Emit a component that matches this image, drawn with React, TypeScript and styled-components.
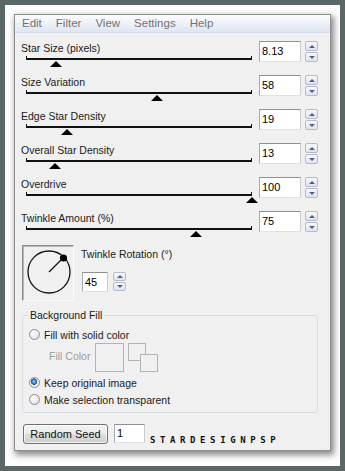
import React from 'react';
import styled, { createGlobalStyle } from 'styled-components';

const GlobalStyle = createGlobalStyle`
  html, body {
    margin: 0;
    padding: 0;
    background: #5b6667;
  }
  body {
    font-family: "Liberation Sans", Arial, sans-serif;
  }
`;

const Frame = styled.div`
  width: 345px;
  height: 471px;
  box-sizing: border-box;
  border: 5px solid #5b6667;
  background: #fdfdfd;
  padding: 9px 9px 0 9px;
`;

const Panel = styled.div`
  border: 1px solid #8e8e8e;
  background: #f0f0f0;
  box-shadow: 2px 3px 6px 1px rgba(0, 0, 0, 0.45);
  display: flex;
  flex-direction: column;
`;

const MenuBar = styled.div`
  height: 17px;
  display: flex;
  align-items: center;
  background: linear-gradient(#fbfcfe 0%, #eef2f9 45%, #dfe6f3 100%);
  border-bottom: 1px solid #d2d9e6;
`;

const MenuItem = styled.span`
  padding: 0 7px;
  font-size: 11.5px;
  color: #727272;
  line-height: 17px;
`;

const Content = styled.div`
  padding: 7px 12px 6px 6px;
  display: flex;
  flex-direction: column;
`;

const SliderRow = styled.div`
  height: 34px;
  display: flex;
  align-items: flex-start;
`;

const SliderColumn = styled.div`
  flex: 1;
  min-width: 0;
`;

const Label = styled.div`
  font-size: 10.5px;
  line-height: 14px;
  color: #1a1a1a;
  margin-top: 1px;
  white-space: nowrap;
`;

const Track = styled.div`
  position: relative;
  margin: 0 7px 0 5px;
  height: 11px;
`;

const TrackLine = styled.div`
  margin-top: 1px;
  height: 2px;
  border-left: 1px solid #111;
  border-right: 1px solid #111;
  border-bottom: 2px solid #111;
`;

const Thumb = styled.div`
  position: absolute;
  top: 5px;
  width: 0;
  height: 0;
  border-left: 6px solid transparent;
  border-right: 6px solid transparent;
  border-bottom: 6px solid #000;
  transform: translateX(-50%);
`;

const NumberBox = styled.div<{ $w: number; $h: number }>`
  width: ${({ $w }) => $w}px;
  height: ${({ $h }) => $h}px;
  box-sizing: border-box;
  margin-top: 1px;
  background: #fff;
  border: 1px solid;
  border-color: #8f9092 #c9cdd3 #dde1e6 #a8abb0;
  font-size: 11px;
  line-height: ${({ $h }) => $h - 2}px;
  padding-left: 2px;
  color: #000;
`;

const Spinner = styled.div<{ $h: number; $gap: number }>`
  width: 13px;
  height: ${({ $h }) => $h}px;
  margin-left: ${({ $gap }) => $gap}px;
  margin-top: 1px;
  display: flex;
  flex-direction: column;
  gap: 1px;
`;

const SpinButton = styled.div<{ $down?: boolean }>`
  flex: 1;
  box-sizing: border-box;
  border: 1px solid #b4bccb;
  border-radius: 2px;
  background: linear-gradient(#f7f8fb, #dfe3ec);
  display: flex;
  align-items: center;
  justify-content: center;

  &::after {
    content: '';
    width: 0;
    height: 0;
    border-left: 3px solid transparent;
    border-right: 3px solid transparent;
    ${({ $down }) =>
      $down ? 'border-top: 3px solid #4e6286;' : 'border-bottom: 3px solid #4e6286;'}
  }
`;

const RotationRow = styled.div`
  display: flex;
  align-items: flex-start;
  margin-top: 1px;
`;

const DialBox = styled.div`
  width: 52px;
  height: 56px;
  box-sizing: border-box;
  margin-left: 1px;
  border: 1px solid;
  border-color: #8a8a8a #fafafa #fafafa #8a8a8a;
  box-shadow: inset 1px 1px 0 #b9b9b9;
  display: flex;
  align-items: center;
  justify-content: center;
`;

const RotationControls = styled.div`
  margin-left: 7px;
  display: flex;
  flex-direction: column;
`;

const RotationLabel = styled(Label)`
  margin-top: 2px;
`;

const InlineControls = styled.div`
  display: flex;
  align-items: flex-start;
  margin-top: 10px;
  margin-left: 1px;
`;

const GroupBox = styled.fieldset`
  margin: 7px 0 0 1px;
  padding: 0 8px 4px 5px;
  border: 1px solid #d5dde3;
  border-radius: 3px;
  min-width: 0;
`;

const Legend = styled.legend`
  padding: 0 2px;
  font-size: 10.5px;
  line-height: 14px;
  color: #1a1a1a;
`;

const RadioRow = styled.div<{ $top: number }>`
  height: 17px;
  margin-top: ${({ $top }) => $top}px;
  margin-left: 1px;
  display: flex;
  align-items: center;
  gap: 4px;
  font-size: 10.5px;
  color: #1a1a1a;
`;

const RadioDot = styled.span<{ $checked?: boolean }>`
  width: 11px;
  height: 11px;
  box-sizing: border-box;
  border-radius: 50%;
  border: 1px solid #8b8f95;
  background: ${({ $checked }) =>
    $checked
      ? 'radial-gradient(circle at 45% 40%, #9fd0ff 0, #2d75c8 2.2px, #1b4f94 3px, #e9edf2 3.4px, #f7f8fa 100%)'
      : 'radial-gradient(circle at 40% 35%, #ffffff 0, #e6e8eb 60%, #c9ccd1 100%)'};
`;

const FillColorRow = styled.div`
  height: 29px;
  display: flex;
  align-items: flex-start;
`;

const DisabledLabel = styled.span`
  font-size: 10.5px;
  line-height: 14px;
  color: #9d9d9d;
  margin: 6px 0 0 21px;
`;

const ColorSwatch = styled.div`
  width: 29px;
  height: 29px;
  box-sizing: border-box;
  border: 1px solid #b3b3b3;
  margin-left: 5px;
`;

const SwapSquares = styled.div`
  position: relative;
  width: 31px;
  height: 29px;
  margin-left: 4px;
`;

const SmallSquare = styled.div<{ $x: number; $y: number }>`
  position: absolute;
  left: ${({ $x }) => $x}px;
  top: ${({ $y }) => $y}px;
  width: 18px;
  height: 18px;
  box-sizing: border-box;
  border: 1px solid #b3b3b3;
  background: #f0f0f0;
`;

const BottomRow = styled.div`
  display: flex;
  align-items: flex-start;
  margin-top: 11px;
`;

const SeedButton = styled.div`
  width: 85px;
  height: 20px;
  box-sizing: border-box;
  margin-left: 2px;
  border: 1px solid #707070;
  border-radius: 3px;
  background: linear-gradient(#f3f3f3 0%, #ebebeb 50%, #dddddd 51%, #cfcfcf 100%);
  box-shadow: inset 0 0 0 1px rgba(255, 255, 255, 0.7);
  font-size: 11px;
  line-height: 18px;
  text-align: center;
  color: #111;
`;

const SeedInput = styled(NumberBox)`
  margin-top: 0;
  margin-left: 6px;
`;

const Signature = styled.span`
  align-self: flex-end;
  margin-left: 5px;
  font-family: "DejaVu Sans Mono", monospace;
  font-weight: bold;
  font-size: 9px;
  line-height: 8px;
  letter-spacing: 4.6px;
  color: #111;
`;

const sliders = [
  { label: 'Star Size (pixels)', value: '8.13', pos: 0.133 },
  { label: 'Size Variation', value: '58', pos: 0.58 },
  { label: 'Edge Star Density', value: '19', pos: 0.18 },
  { label: 'Overall Star Density', value: '13', pos: 0.128 },
  { label: 'Overdrive', value: '100', pos: 1 },
  { label: 'Twinkle Amount (%)', value: '75', pos: 0.752 },
];

const Dial = () => (
  <svg width="50" height="54" viewBox="0 0 50 54">
    <circle cx="26" cy="26" r="21" fill="none" stroke="#111" strokeWidth="1.3" />
    <line x1="26" y1="26" x2="40" y2="12" stroke="#111" strokeWidth="1.3" />
    <circle cx="40.5" cy="12" r="3.6" fill="#000" />
  </svg>
);

const Spin = ({ h, gap }: { h: number; gap: number }) => (
  <Spinner $h={h} $gap={gap}>
    <SpinButton />
    <SpinButton $down />
  </Spinner>
);

export default function App() {
  return (
    <>
      <GlobalStyle />
      <Frame>
        <Panel>
          <MenuBar>
            {['Edit', 'Filter', 'View', 'Settings', 'Help'].map((m) => (
              <MenuItem key={m}>{m}</MenuItem>
            ))}
          </MenuBar>
          <Content>
            {sliders.map((s) => (
              <SliderRow key={s.label}>
                <SliderColumn>
                  <Label>{s.label}</Label>
                  <Track>
                    <TrackLine />
                    <Thumb style={{ left: `${s.pos * 100}%` }} />
                  </Track>
                </SliderColumn>
                <NumberBox $w={42} $h={21}>{s.value}</NumberBox>
                <Spin h={21} gap={4} />
              </SliderRow>
            ))}

            <RotationRow>
              <DialBox>
                <Dial />
              </DialBox>
              <RotationControls>
                <RotationLabel>Twinkle Rotation (°)</RotationLabel>
                <InlineControls>
                  <NumberBox $w={26} $h={20}>45</NumberBox>
                  <Spin h={19} gap={5} />
                </InlineControls>
              </RotationControls>
            </RotationRow>

            <GroupBox>
              <Legend>Background Fill</Legend>
              <RadioRow $top={4}>
                <RadioDot />
                Fill with solid color
              </RadioRow>
              <FillColorRow>
                <DisabledLabel>Fill Color</DisabledLabel>
                <ColorSwatch />
                <SwapSquares>
                  <SmallSquare $x={0} $y={0} />
                  <SmallSquare $x={12} $y={11} />
                </SwapSquares>
              </FillColorRow>
              <RadioRow $top={2}>
                <RadioDot $checked />
                Keep original image
              </RadioRow>
              <RadioRow $top={0}>
                <RadioDot />
                Make selection transparent
              </RadioRow>
            </GroupBox>

            <BottomRow>
              <SeedButton>Random Seed</SeedButton>
              <SeedInput $w={31} $h={19}>1</SeedInput>
              <Signature>STARDESIGNPSP</Signature>
            </BottomRow>
          </Content>
        </Panel>
      </Frame>
    </>
  );
}
